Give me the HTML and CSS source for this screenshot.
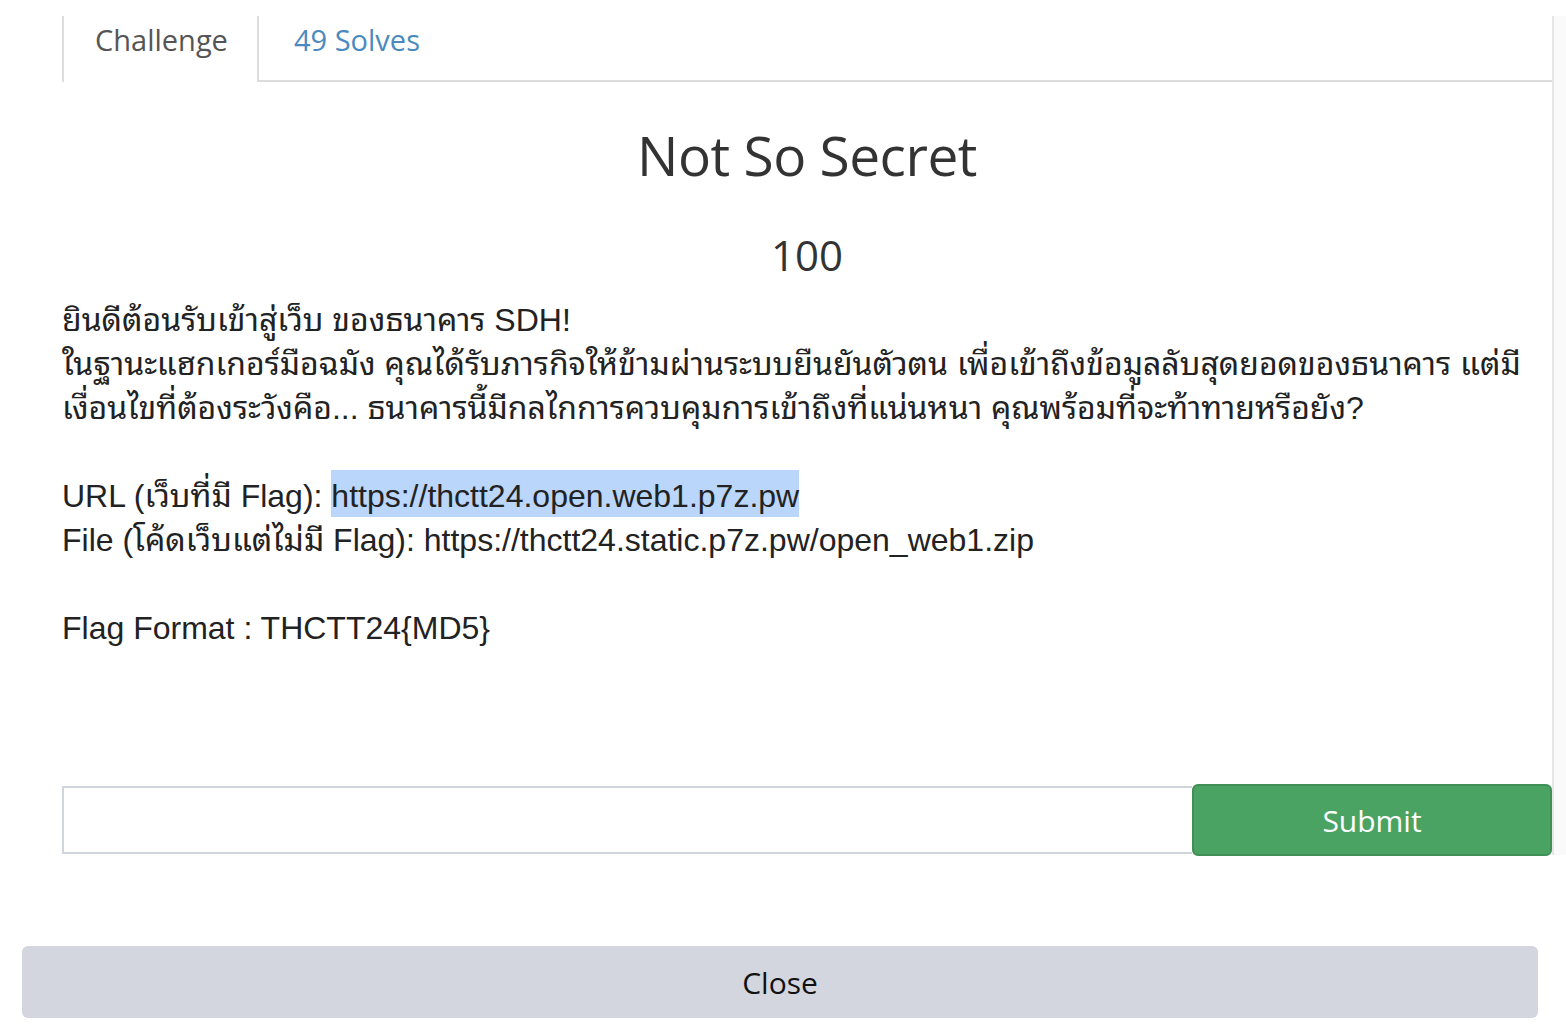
FILE: index.html
```html
<!DOCTYPE html>
<html lang="th">
<head>
<meta charset="utf-8">
<title>Not So Secret</title>
<link rel="stylesheet" href="styles.css">
</head>
<body>
<div class="top">
  <div class="panel">
    <nav class="tabs">
      <a class="tab active">Challenge</a>
      <a class="tab link">49 Solves</a>
      <div class="tab-fill"></div>
    </nav>
    <div class="pane">
      <h3 class="name">Not So Secret</h3>
      <h4 class="value">100</h4>
      <div class="desc">
        <p>ยินดีต้อนรับเข้าสู่เว็บ ของธนาคาร SDH!<br>ในฐานะแฮกเกอร์มือฉมัง คุณได้รับภารกิจให้ข้ามผ่านระบบยืนยันตัวตน เพื่อเข้าถึงข้อมูลลับสุดยอดของธนาคาร แต่มีเงื่อนไขที่ต้องระวังคือ... ธนาคารนี้มีกลไกการควบคุมการเข้าถึงที่แน่นหนา คุณพร้อมที่จะท้าทายหรือยัง?</p>
        <p>URL (เว็บที่มี Flag): <span class="sel">https://thctt24.open.web1.p7z.pw</span><br>File (โค้ดเว็บแต่ไม่มี Flag): https://thctt24.static.p7z.pw/open_web1.zip</p>
        <p>Flag Format : THCTT24{MD5}</p>
      </div>
      <form class="submit-row">
        <input class="answer" type="text">
        <button class="btn-submit" type="button">Submit</button>
      </form>
    </div>
  </div>
  <div class="gutter"></div>
</div>
<div class="footer">
  <button class="btn-close" type="button">Close</button>
</div>
</body>
</html>
```
FILE: styles.css
```css
html, body {
  margin: 0;
  padding: 0;
  background: #ffffff;
}
body {
  width: 1566px;
  height: 1036px;
  overflow: hidden;
  font-family: "Open Sans", "Noto Sans", sans-serif;
}
.top {
  display: flex;
  padding-top: 16px;
}
.panel {
  margin-left: 62px;
  width: 1490px;
  height: 839px;
  border-right: 2px solid #e6e6e6;
  box-sizing: content-box;
}
.gutter {
  flex: 1;
  height: 839px;
  background: #fafafa;
}
.tabs {
  display: flex;
  height: 66px;
}
.tab {
  font-size: 29px;
  line-height: 48px;
  padding: 0 32px 16px;
  display: block;
}
.tab.active {
  color: #555555;
  border-left: 2px solid #dddddd;
  border-right: 2px solid #dddddd;
  width: 131px;
  padding-left: 31px;
  padding-right: 31px;
}
.tab.link {
  color: #4a8ac0;
  border-bottom: 2px solid #dddddd;
  padding-left: 35px;
}
.tab-fill {
  flex: 1;
  border-bottom: 2px solid #dddddd;
}
.name {
  margin: 37px 0 0;
  text-align: center;
  font-weight: 400;
  font-size: 55px;
  line-height: 72px;
  color: #333333;
  letter-spacing: -0.5px;
}
.value {
  margin: 37px 0 0;
  text-align: center;
  font-weight: 400;
  font-size: 42px;
  line-height: 54px;
  color: #333333;
}
.desc {
  margin-top: 16px;
  font-family: "Liberation Sans", "Umpush", "Waree", "Noto Sans Thai Looped", "Loma", "Noto Sans Thai", "DejaVu Sans", sans-serif;
  font-size: 32px;
  line-height: 44px;
  color: #222222;
  height: 486px;
}
.desc p {
  margin: 0 0 44px;
}
.sel {
  background: #bad6fb;
  padding: 8px 0 3px;
}
.submit-row {
  display: flex;
  align-items: center;
  margin: 0;
}
.answer {
  box-sizing: border-box;
  width: 1130px;
  height: 68px;
  border: 2px solid #d1d5dc;
  border-right: none;
  margin: 0;
  padding: 0;
  background: #fff;
}
.btn-submit {
  box-sizing: border-box;
  width: 360px;
  height: 72px;
  margin: 0;
  background: #4aa363;
  border: 2px solid #3f8f57;
  border-radius: 6px;
  color: #ffffff;
  font-family: "Open Sans", "Noto Sans", sans-serif;
  font-size: 30px;
}
.footer {
  padding: 91px 28px 0 22px;
}
.btn-close {
  display: block;
  box-sizing: border-box;
  width: 1516px;
  height: 72px;
  margin: 0;
  border: none;
  border-radius: 6px;
  background: #d3d6de;
  color: #111111;
  font-family: "Open Sans", "Noto Sans", sans-serif;
  font-size: 30px;
}
```
